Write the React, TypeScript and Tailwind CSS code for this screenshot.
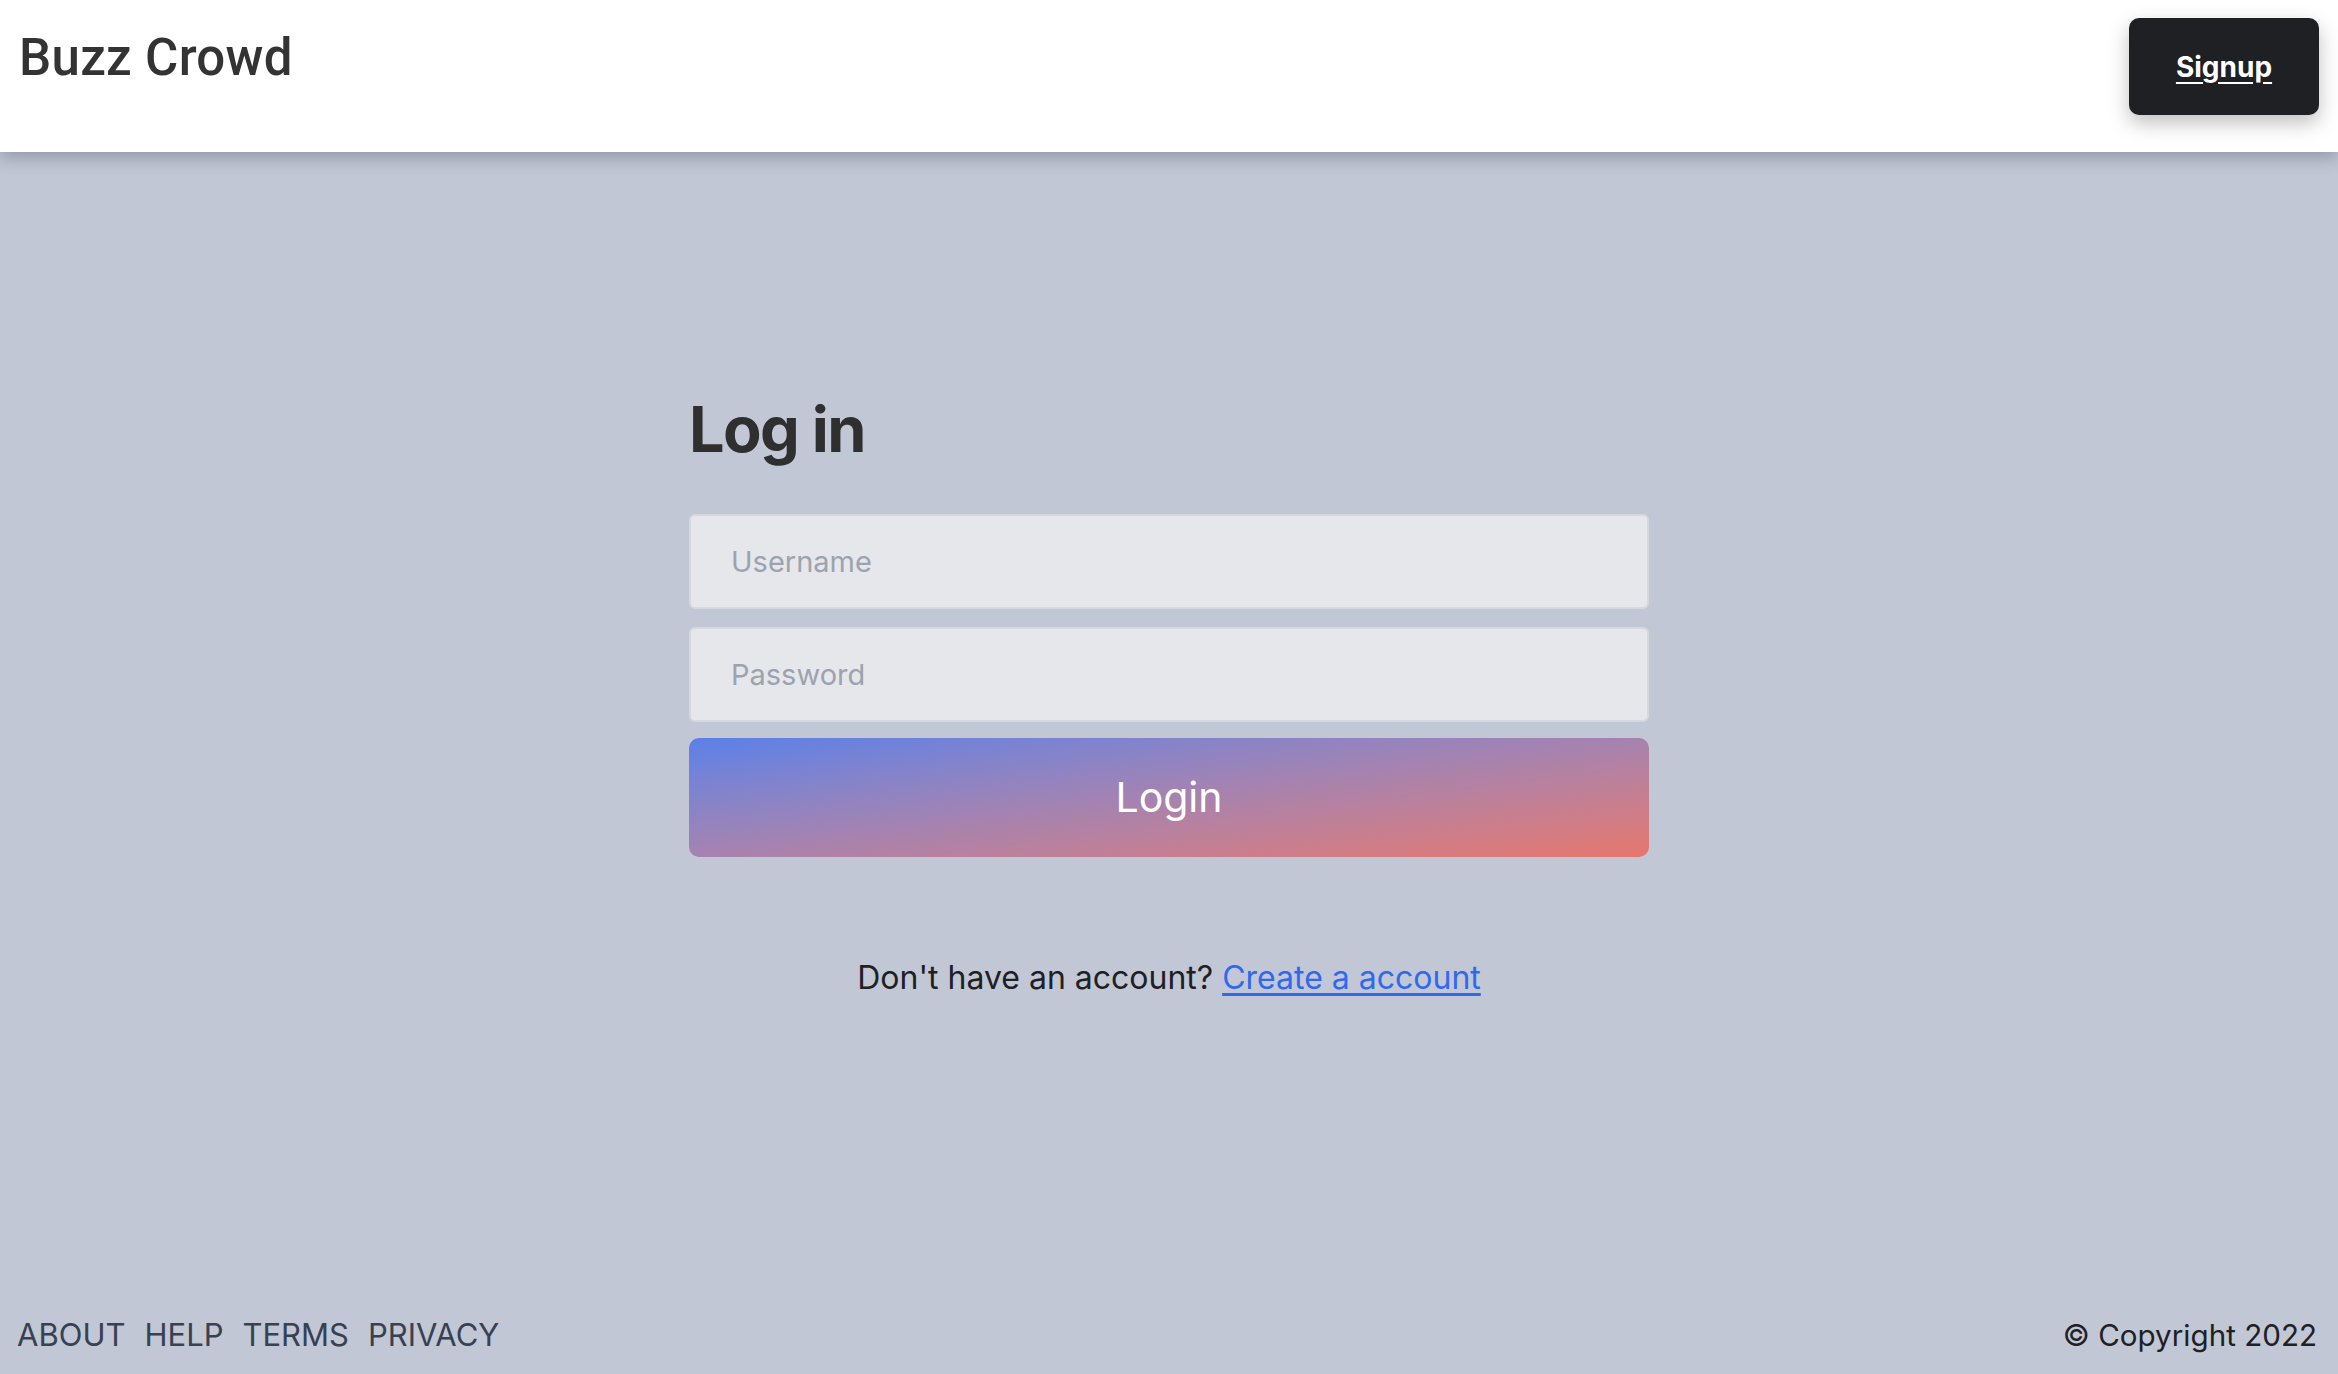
import React from 'react';

function Header(): JSX.Element {
    return (
        <header className="relative z-10 flex h-[152px] items-start justify-between bg-white px-[19px] shadow-[0_6px_16px_rgba(60,70,90,0.35)]">
            <h1 className="pt-[30px] font-['Roboto',Arial,sans-serif] text-[51px] font-medium leading-[56px] tracking-[0.3px] text-[#333333]">
                Buzz Crowd
            </h1>
            <button className="mt-[18px] flex h-[97px] w-[190px] items-center justify-center rounded-[10px] bg-[#1f2023] text-[28px] font-bold text-white underline underline-offset-[5px] shadow-[0_8px_20px_rgba(0,0,0,0.25)]">
                Signup
            </button>
        </header>
    );
}

function LoginForm(): JSX.Element {
    return (
        <div className="w-[960px] pt-[246px]">
            <h2 className="text-[63px] font-bold leading-none tracking-tight text-[#2f2f2f]">Log in</h2>
            <form className="mt-[53px] flex flex-col">
                <input
                    type="text"
                    placeholder="Username"
                    className="h-[95px] rounded-[6px] border-2 border-[#d6d8de] bg-[#e5e7eb] px-[40px] text-[29px] text-gray-700 outline-none placeholder:text-[#9ca3af]"
                />
                <input
                    type="password"
                    placeholder="Password"
                    className="mt-[18px] h-[95px] rounded-[6px] border-2 border-[#d6d8de] bg-[#e5e7eb] px-[40px] text-[29px] text-gray-700 outline-none placeholder:text-[#9ca3af]"
                />
                <button
                    type="button"
                    className="mt-[16px] h-[119px] rounded-[10px] bg-linear-to-br from-[#5a80e8] to-[#e6766c] text-[41px] text-white"
                >
                    Login
                </button>
            </form>
            <p className="mt-[102px] text-center text-[32px] leading-[38px] text-[#1f2023]">
                Don't have an account?{' '}
                <a href="#" className="text-[#3068ee] underline underline-offset-[4px]">
                    Create a account
                </a>
            </p>
        </div>
    );
}

function Footer(): JSX.Element {
    return (
        <footer className="flex items-end justify-between px-[17px] pb-[19px] pr-[21px]">
            <nav className="flex gap-[19px] text-[31px] leading-[40px] text-[#374151]">
                <a href="#">ABOUT</a>
                <a href="#">HELP</a>
                <a href="#">TERMS</a>
                <a href="#">PRIVACY</a>
            </nav>
            <div className="text-[29.6px] leading-[40px] text-[#1f2023]">© Copyright 2022</div>
        </footer>
    );
}

export default function App(): JSX.Element {
    return (
        <div className="flex min-h-screen flex-col bg-[#c1c7d5] font-['Inter',sans-serif]">
            <Header />
            <main className="flex flex-1 justify-center">
                <LoginForm />
            </main>
            <Footer />
        </div>
    );
}
